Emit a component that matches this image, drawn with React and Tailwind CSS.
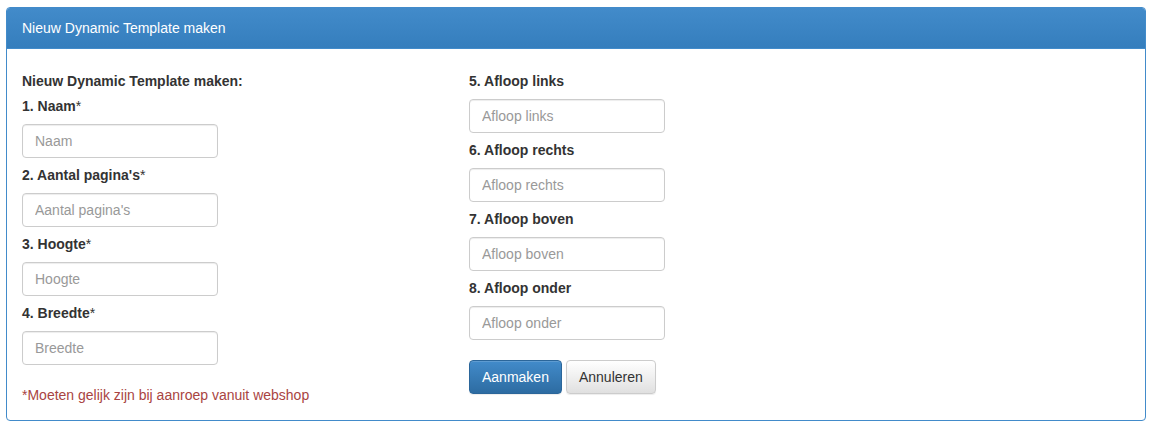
import React from "react";

const leftFields = [
  { label: "1. Naam", placeholder: "Naam" },
  { label: "2. Aantal pagina's", placeholder: "Aantal pagina's" },
  { label: "3. Hoogte", placeholder: "Hoogte" },
  { label: "4. Breedte", placeholder: "Breedte" },
];

const rightFields = [
  { label: "5. Afloop links", placeholder: "Afloop links" },
  { label: "6. Afloop rechts", placeholder: "Afloop rechts" },
  { label: "7. Afloop boven", placeholder: "Afloop boven" },
  { label: "8. Afloop onder", placeholder: "Afloop onder" },
];

const Field = ({ label, placeholder, required }) => (
  <div className="mb-[7px] last:mb-0">
    <label className="block h-5 mb-2 font-bold text-[14px] leading-5 text-[#333]">
      {label}
      {required && <span className="font-normal">*</span>}
    </label>
    <input
      type="text"
      placeholder={placeholder}
      className="block w-[196px] h-[34px] px-3 border border-[#ccc] rounded bg-white text-[14px] text-[#555] placeholder:text-[#999] shadow-[inset_0_1px_1px_rgba(0,0,0,0.075)] outline-none"
    />
  </div>
);

const App = () => {
  return (
    <div
      className="min-h-screen bg-white pt-[7px] px-[6px]"
      style={{ fontFamily: '"Liberation Sans", Arial, sans-serif' }}
    >
      <div className="w-[1140px] border border-[#428bca] rounded bg-white">
        {/* Header */}
        <div className="h-10 px-[15px] flex items-center rounded-t-[3px] bg-gradient-to-b from-[#428bca] to-[#357ebd] border-b border-[#428bca] box-content">
          <h3 className="text-white text-[14px] leading-5">Nieuw Dynamic Template maken</h3>
        </div>

        {/* Body */}
        <div className="pt-[22px] pb-[15px] px-[15px] flex">
          {/* Left column */}
          <div className="w-[447px]">
            <div className="h-5 mb-[5px] font-bold text-[14px] leading-5 text-[#333]">
              Nieuw Dynamic Template maken:
            </div>
            {leftFields.map((f) => (
              <Field key={f.label} {...f} required />
            ))}
            <p className="mt-5 text-[14px] leading-5 text-[#a94442]">
              *Moeten gelijk zijn bij aanroep vanuit webshop
            </p>
          </div>

          {/* Right column */}
          <div className="flex-1">
            {rightFields.map((f) => (
              <Field key={f.label} {...f} />
            ))}
            <div className="mt-5 flex gap-1">
              <button className="h-[34px] px-3 rounded border border-[#2b669a] bg-gradient-to-b from-[#428bca] to-[#2d6ca2] text-white text-[14px] shadow-[inset_0_1px_0_rgba(255,255,255,0.15),0_1px_1px_rgba(0,0,0,0.075)]">
                Aanmaken
              </button>
              <button className="h-[34px] px-3 rounded border border-[#ccc] bg-gradient-to-b from-white to-[#e0e0e0] text-[#333] text-[14px] shadow-[inset_0_1px_0_rgba(255,255,255,0.15),0_1px_1px_rgba(0,0,0,0.075)]">
                Annuleren
              </button>
            </div>
          </div>
        </div>
      </div>
    </div>
  );
};

export default App;
